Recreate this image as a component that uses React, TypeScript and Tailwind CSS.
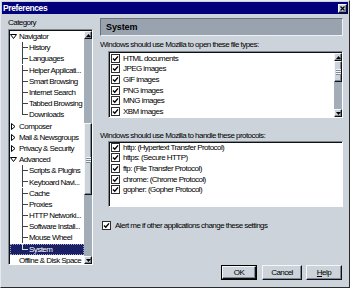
import React from 'react';

type TreeRow = {
  label: string;
  kind: 'open' | 'closed' | 'leaf' | 'child' | 'lastChild';
  selected?: boolean;
};

const tree: TreeRow[] = [
  { label: 'Navigator', kind: 'open' },
  { label: 'History', kind: 'child' },
  { label: 'Languages', kind: 'child' },
  { label: 'Helper Applicati...', kind: 'child' },
  { label: 'Smart Browsing', kind: 'child' },
  { label: 'Internet Search', kind: 'child' },
  { label: 'Tabbed Browsing', kind: 'child' },
  { label: 'Downloads', kind: 'lastChild' },
  { label: 'Composer', kind: 'closed' },
  { label: 'Mail & Newsgroups', kind: 'closed' },
  { label: 'Privacy & Security', kind: 'closed' },
  { label: 'Advanced', kind: 'open' },
  { label: 'Scripts & Plugins', kind: 'child' },
  { label: 'Keyboard Navi...', kind: 'child' },
  { label: 'Cache', kind: 'child' },
  { label: 'Proxies', kind: 'child' },
  { label: 'HTTP Networki...', kind: 'child' },
  { label: 'Software Install...', kind: 'child' },
  { label: 'Mouse Wheel', kind: 'child' },
  { label: 'System', kind: 'lastChild', selected: true },
  { label: 'Offline & Disk Space', kind: 'leaf' },
];

const fileTypes = ['HTML documents', 'JPEG images', 'GIF images', 'PNG images', 'MNG images', 'XBM images'];

const protocols = [
  'http: (Hypertext Transfer Protocol)',
  'https: (Secure HTTP)',
  'ftp: (File Transfer Protocol)',
  'chrome: (Chrome Protocol)',
  'gopher: (Gopher Protocol)',
];

const raised =
  'border border-t-[#f4f6f8] border-l-[#f4f6f8] border-r-[#111] border-b-[#111] shadow-[inset_-1px_-1px_0_#7d8894]';
const sunken =
  'border border-t-[#7d8894] border-l-[#7d8894] border-r-white border-b-white shadow-[inset_1px_1px_0_#111]';

function Check() {
  return (
    <span className="w-[9px] h-[9px] shrink-0 bg-white border border-[#2e2e2e] flex items-center justify-center">
      <svg width="7" height="7" viewBox="0 0 7 7">
        <path d="M1 3.4 L2.8 5.3 L6 1.4" stroke="#000" strokeWidth="1.4" fill="none" />
      </svg>
    </span>
  );
}

function Arrow({ down }: { down?: boolean }) {
  return (
    <div className={`h-[8px] shrink-0 bg-[#ccd3da] flex items-center justify-center ${raised}`}>
      <svg width="5" height="3" viewBox="0 0 5 3">
        <polygon points={down ? '0,0 5,0 2.5,3' : '2.5,0 5,3 0,3'} fill="#000" />
      </svg>
    </div>
  );
}

function Thumb({ h }: { h: string }) {
  return (
    <div className={`${h} shrink-0 bg-[#ccd3da] flex items-center justify-center ${raised}`}>
      <svg width="5" height="7" viewBox="0 0 5 7" shapeRendering="crispEdges">
        <path d="M0 1.5 H5 M0 3.5 H5 M0 5.5 H5" stroke="#f4f6f8" strokeWidth="1" />
        <path d="M0 2.5 H5 M0 4.5 H5 M0 6.5 H5" stroke="#7d8894" strokeWidth="1" />
      </svg>
    </div>
  );
}

function Twisty({ open }: { open: boolean }) {
  return (
    <svg width="7" height="7" viewBox="0 0 7 7" className="shrink-0">
      {open ? (
        <polygon points="0.5,1.5 6.5,1.5 3.5,5.5" stroke="#000" fill="none" strokeWidth="1" />
      ) : (
        <polygon points="1.5,0.5 5,3.5 1.5,6.5" stroke="#000" fill="none" strokeWidth="1" />
      )}
    </svg>
  );
}

function Connector({ last }: { last: boolean }) {
  return (
    <svg width="7" height="11.2" viewBox="0 0 7 11.2" className="shrink-0" shapeRendering="crispEdges">
      <path d={last ? 'M0.5 0 V5.6 H6' : 'M0.5 0 V11.2 M0.5 5.6 H6'} stroke="currentColor" strokeWidth="1" fill="none" />
    </svg>
  );
}

function TreeItem({ row }: { row: TreeRow }) {
  const isChild = row.kind === 'child' || row.kind === 'lastChild';
  return (
    <div
      className={`h-[11.2px] flex items-center whitespace-nowrap ${
        row.selected
          ? 'bg-[#1b1f63] text-white outline-1 outline-dotted outline-[#9aa4d8] -outline-offset-1'
          : 'text-black'
      } ${isChild ? 'pl-[12px]' : ''}`}
    >
      {isChild ? (
        <span className={row.selected ? 'text-[#d8dce0] flex' : 'text-[#3c434b] flex'}>
          <Connector last={row.kind === 'lastChild'} />
        </span>
      ) : row.kind === 'leaf' ? (
        <span className="w-[7px] shrink-0" />
      ) : (
        <Twisty open={row.kind === 'open'} />
      )}
      <span className={isChild ? '' : 'ml-[2px]'}>{row.label}</span>
    </div>
  );
}

export default function App() {
  return (
    <div className="w-[350px] h-[288px] bg-[#ccd3da] border border-t-[#e6eaee] border-l-[#e6eaee] border-r-[#2a2a2a] border-b-[#2a2a2a] p-[1px] flex flex-col font-['Liberation_Sans',Arial,sans-serif] text-[8px] tracking-[-0.55px] leading-[9px] text-black overflow-hidden">
      <div className="h-[12px] shrink-0 bg-[#00007b] flex items-center justify-between pl-[1px] pr-[1px]">
        <span className="text-white font-bold text-[8.5px] tracking-[-0.4px]">Preferences</span>
        <div className={`w-[9px] h-[9px] bg-[#ccd3da] flex items-center justify-center ${raised}`}>
          <svg width="5" height="5" viewBox="0 0 5 5">
            <path d="M0.5 0.5 L4.5 4.5 M4.5 0.5 L0.5 4.5" stroke="#000" strokeWidth="1.2" />
          </svg>
        </div>
      </div>

      <div className="flex flex-1 min-h-0">
        <div className="ml-[6px] w-[85px] pt-[4px] flex flex-col">
          <div className="h-[9px]">Category</div>
          <div className={`mt-[2px] h-[236px] bg-white flex ${sunken}`}>
            <div className="flex-1 min-w-0 pt-[1px] pl-[1px] overflow-hidden">
              {tree.map((row, i) => (
                <TreeItem key={i} row={row} />
              ))}
            </div>
            <div className="w-[8px] flex flex-col pt-[1px]">
              <Arrow />
              <div className="h-[84px] shrink-0 bg-[#a3adb7]" />
              <Thumb h="h-[72px]" />
              <div className="flex-1 bg-[#a3adb7]" />
              <Arrow down />
            </div>
          </div>
        </div>

        <div className="ml-[7px] w-[243px] pt-[4px] flex flex-col">
          <div className="h-[18px] shrink-0 bg-[#98a3af] border border-t-[#66717d] border-l-[#66717d] border-r-[#eef1f4] border-b-[#eef1f4] flex items-center pl-[5px]">
            <span className="font-bold text-[9px] tracking-[-0.1px]">System</span>
          </div>

          <div className="mt-[4px] h-[9px]">Windows should use Mozilla to open these file types:</div>
          <div className={`mt-[2px] ml-[8px] h-[67px] bg-white flex ${sunken}`}>
            <div className="flex-1 pl-[2px] pt-[1px]">
              {fileTypes.map((t) => (
                <div key={t} className="h-[10.6px] flex items-center">
                  <Check />
                  <span className="ml-[3px]">{t}</span>
                </div>
              ))}
            </div>
            <div className="w-[8px] flex flex-col pt-[1px]">
              <Arrow />
              <Thumb h="h-[21px]" />
              <div className="flex-1 bg-[#a3adb7]" />
              <Arrow down />
            </div>
          </div>

          <div className="mt-[13px] h-[9px]">Windows should use Mozilla to handle these protocols:</div>
          <div className={`mt-[1px] ml-[8px] h-[66px] bg-white ${sunken}`}>
            <div className="pl-[2px]">
              {protocols.map((p) => (
                <div key={p} className="h-[10.6px] flex items-center">
                  <Check />
                  <span className="ml-[3px]">{p}</span>
                </div>
              ))}
            </div>
          </div>

          <div className="mt-[13px] h-[10px] flex items-center pl-[2px]">
            <Check />
            <span className="ml-[4px]">Alert me if other applications change these settings</span>
          </div>

          <div className="mt-auto mb-[6px] pr-[1px] flex justify-end gap-[5px]">
            <button className="w-[36px] h-[15px] border border-black p-0 bg-[#ccd3da] flex">
              <span className={`flex-1 flex items-center justify-center ${raised}`}>OK</span>
            </button>
            <button className={`w-[40px] h-[15px] bg-[#ccd3da] flex items-center justify-center ${raised}`}>
              Cancel
            </button>
            <button className={`w-[36px] h-[15px] ml-[-1px] bg-[#ccd3da] flex items-center justify-center ${raised}`}>
              <span>
                <span className="underline">H</span>elp
              </span>
            </button>
          </div>
        </div>
      </div>
    </div>
  );
}
